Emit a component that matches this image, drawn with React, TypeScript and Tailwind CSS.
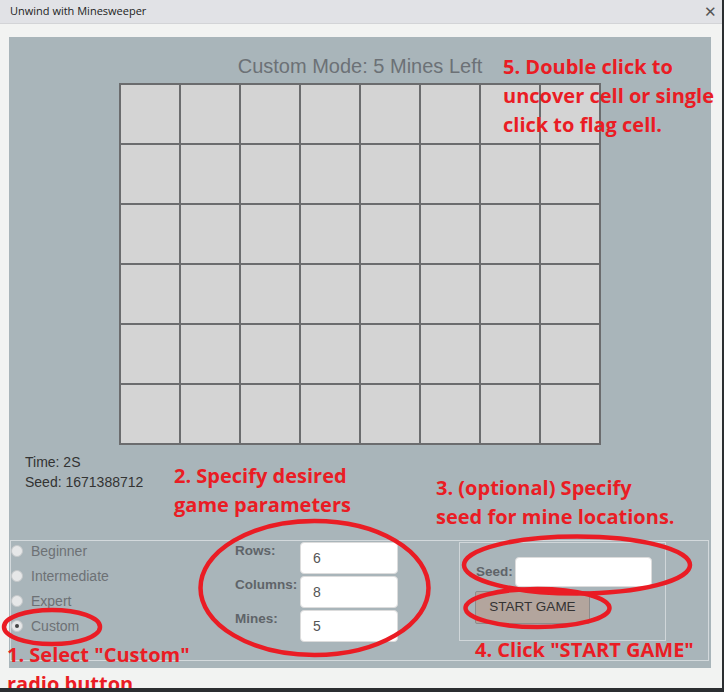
const cells = Array.from({ length: 48 }, (_, i) => i);

const modes = [
  { label: "Beginner", checked: false },
  { label: "Intermediate", checked: false },
  { label: "Expert", checked: false },
  { label: "Custom", checked: true },
];

const params = [
  { label: "Rows:", value: "6" },
  { label: "Columns:", value: "8" },
  { label: "Mines:", value: "5" },
];

function Note({ className, lines }: { className: string; lines: string[] }) {
  return (
    <div
      className={`absolute whitespace-nowrap font-['Open_Sans',sans-serif] text-[20px] font-bold leading-[29px] text-[#ea1c24] ${className}`}
    >
      {lines.map((l) => (
        <div key={l}>{l}</div>
      ))}
    </div>
  );
}

export default function App() {
  return (
    <div className="relative flex h-[692px] w-[724px] flex-col overflow-hidden border-r-2 border-[#2b2e31] bg-[#f2f3f2] font-['Liberation_Sans',Arial,sans-serif]">
      {/* title bar */}
      <div className="flex h-[24px] shrink-0 items-center justify-between border-b border-[#d3d4d7] bg-[#e1e2e6] pl-[10px] pr-[5px]">
        <span className="font-['Open_Sans',sans-serif] text-[11px] text-[#222]">Unwind with Minesweeper</span>
        <span className="text-[15px] leading-none text-[#555]">✕</span>
      </div>

      <div className="mt-[13px] ml-[9px] h-[631px] w-[702px] shrink-0 bg-[#a9b5ba] pt-[17px]">
        <h1 className="text-center text-[20px] leading-[24px] text-[#6c7176]">Custom Mode: 5 Mines Left</h1>

        <div className="mx-auto mt-[5px] grid w-[482px] grid-cols-8 gap-[2px] bg-[#6b6c6e] p-[2px]">
          {cells.map((c) => (
            <div key={c} className="h-[58px] bg-[#d4d4d4]" />
          ))}
        </div>

        <div className="mt-[7px] pl-[16px] text-[14px] leading-[20px] text-[#333]">
          <div>Time: 2S</div>
          <div>Seed: 1671388712</div>
        </div>

        <div className="mt-[48px] ml-[1px] flex h-[121px] w-[699px] border border-[#d3d9dc]">
          <div className="flex w-[224px] flex-col gap-[5px]">
            {modes.map((m) => (
              <div key={m.label} className="flex h-[20px] items-center gap-[8px]">
                <span className="flex h-[12px] w-[12px] items-center justify-center rounded-full border border-[#c5c8ca] bg-[#e6e7e8]">
                  {m.checked && <span className="h-[4px] w-[4px] rounded-full bg-[#444]" />}
                </span>
                <span className="text-[14px] text-[#6d7175]">{m.label}</span>
              </div>
            ))}
          </div>

          <div className="flex flex-col gap-[2px] pt-[1px]">
            {params.map((p) => (
              <div key={p.label} className="flex items-start">
                <span className="mt-[1px] w-[65px] text-[13.5px] font-bold leading-[16px] text-[#5f6469]">{p.label}</span>
                <div className="flex h-[32px] w-[98px] items-center rounded-[4px] border border-[#dcdcdc] bg-white pl-[12px] text-[14px] text-[#555]">
                  {p.value}
                </div>
              </div>
            ))}
          </div>

          <div className="mt-[1px] ml-[61px] flex h-[99px] w-[207px] flex-col border border-[#d0d6d9] pt-[14px] pl-[16px]">
            <div className="flex items-center gap-[2px]">
              <span className="text-[13.5px] font-bold text-[#5f6469]">Seed:</span>
              <div className="h-[30px] w-[137px] rounded-[4px] border border-[#dcdcdc] bg-white" />
            </div>
            <button
              type="button"
              className="mt-[4px] -ml-[1px] flex h-[33px] w-[115px] items-center justify-center rounded-[2px] border border-[#8c8c8c] bg-[#b3a59d] text-[13.5px] text-[#333]"
            >
              START GAME
            </button>
          </div>
        </div>
      </div>

      <div className="h-[20px] shrink-0" />
      <div className="relative z-10 h-[4px] shrink-0 bg-[#2b2e31]" />

      {/* annotations */}
      <svg className="pointer-events-none absolute inset-0" width="724" height="692">
        <g fill="none" stroke="#ea1c24" strokeWidth="4.5">
          <ellipse cx="52" cy="627" rx="48" ry="17" />
          <ellipse cx="314.5" cy="588" rx="114" ry="67" />
          <ellipse cx="577" cy="565" rx="113" ry="28.5" />
          <ellipse cx="537.5" cy="608" rx="72" ry="19" />
        </g>
      </svg>

      <Note className="left-[503px] top-[52px]" lines={["5. Double click to", "uncover cell or single", "click to flag cell."]} />
      <Note className="left-[174px] top-[461px]" lines={["2. Specify desired", "game parameters"]} />
      <Note className="left-[436px] top-[473px]" lines={["3. (optional) Specify", "seed for mine locations."]} />
      <Note className="left-[475px] top-[635px]" lines={['4. Click "START GAME"']} />
      <Note className="left-[7px] top-[640px]" lines={['1. Select "Custom"', "radio button"]} />
    </div>
  );
}
